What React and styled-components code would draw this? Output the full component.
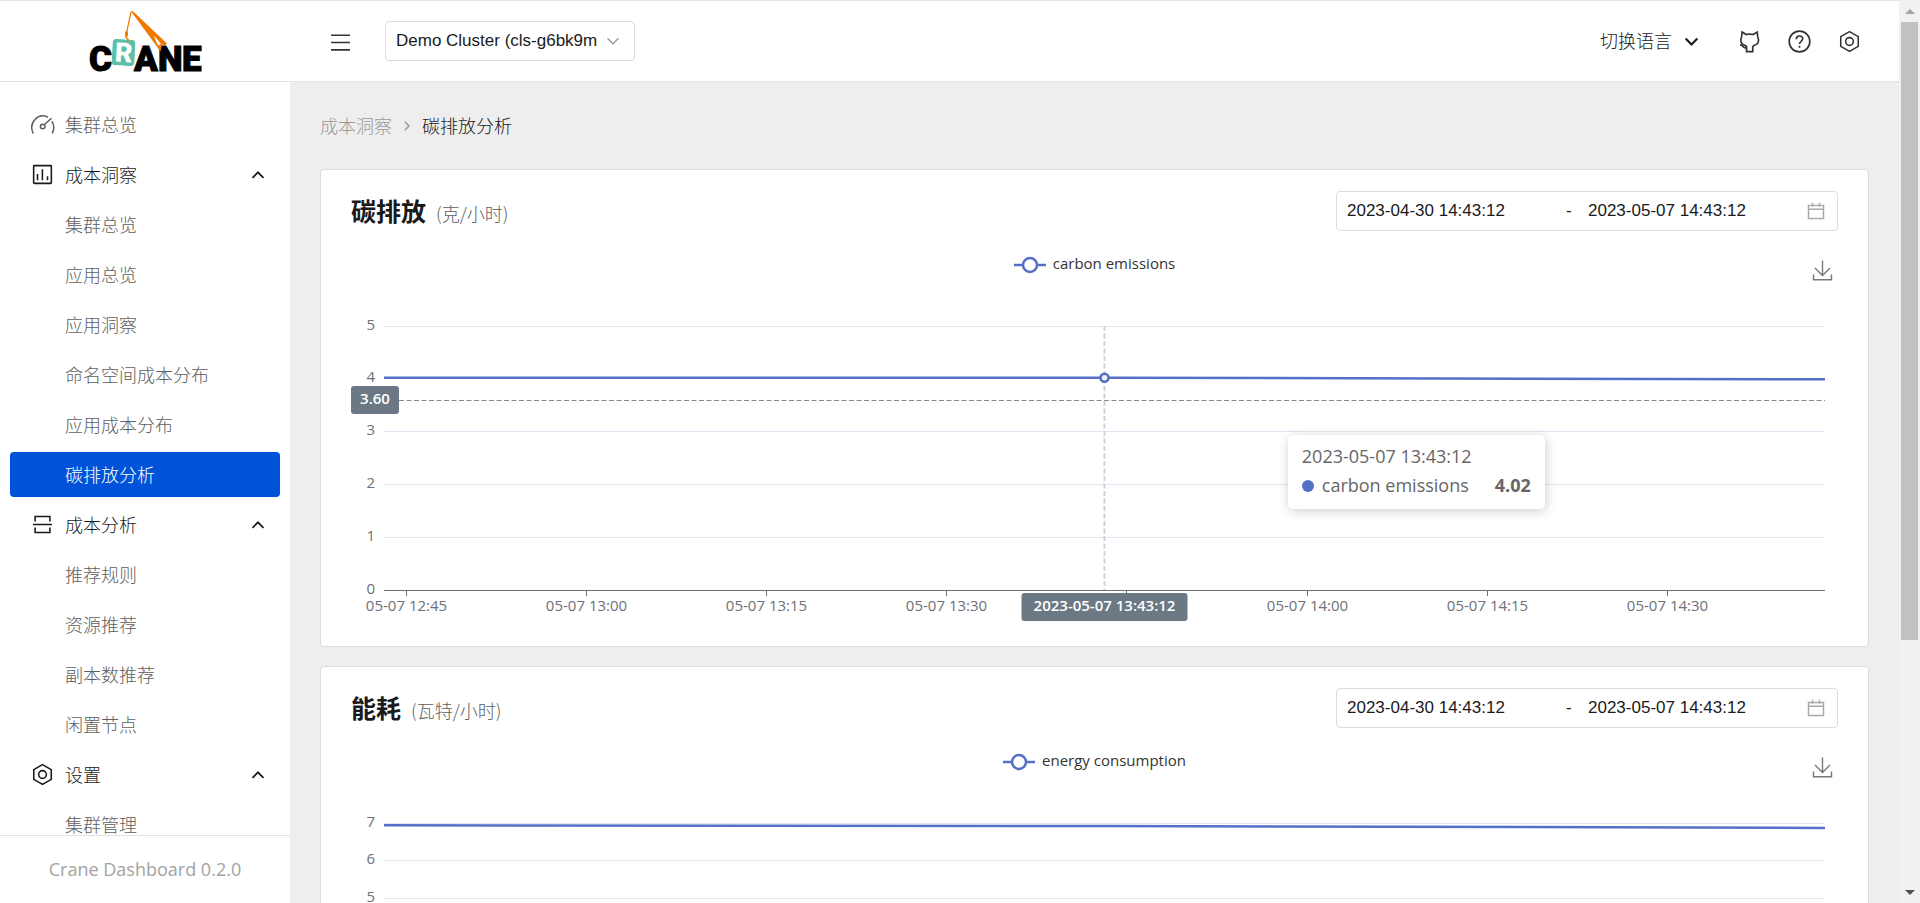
import React, { useLayoutEffect, useRef, useState } from "react";
import styled, { createGlobalStyle, css } from "styled-components";

const SANS = '"Open Sans", "Noto Sans CJK SC", sans-serif';
const CJK = '"Noto Sans CJK SC", sans-serif';
const ARIAL = '"Liberation Sans", "Noto Sans CJK SC", sans-serif';

const GlobalStyle = createGlobalStyle`
  *, *::before, *::after { box-sizing: border-box; }
  body { margin: 0; font-family: ${SANS}; font-size: 18px; color: #1a1a1a; background: #eee; }
  button, input, select { font: inherit; color: inherit; }
  button { border: 0; padding: 0; background: none; cursor: pointer; }
  a { color: inherit; text-decoration: none; }
  ul { list-style: none; margin: 0; padding: 0; }
`;

const Window = styled.div`
  display: flex;
  height: 100vh;
  overflow: hidden;
`;

const Layout = styled.div`
  flex: 1;
  min-width: 0;
  display: flex;
  flex-direction: column;
`;

const Header = styled.header`
  display: flex;
  align-items: center;
  flex: none;
  height: 82px;
  background: #fff;
  border-top: 1px solid #e1e5ea;
  border-bottom: 1px solid #e3e3e3;
`;

const LogoLink = styled.a`
  display: flex;
  justify-content: center;
  width: 290px;
`;

const LogoSvg = styled.svg`
  overflow: visible;
  font-family: Roboto, sans-serif;
  font-weight: 900;
`;

const MenuButton = styled.button`
  display: flex;
  margin-left: 38px;
  padding-top: 2px;
  color: #333;
`;

const SelectBox = styled.div`
  display: grid;
  align-items: center;
  width: 250px;
  height: 40px;
  margin-left: 32px;
  border: 1px solid #dcdcdc;
  border-radius: 4px;

  > * { grid-area: 1 / 1; }
  > svg { justify-self: end; margin-right: 14px; color: #999; pointer-events: none; }
`;

const ClusterSelect = styled.select`
  appearance: none;
  width: 100%;
  height: 38px;
  border: 0;
  padding: 0 30px 2px 10px;
  background: none;
  font-family: ${ARIAL};
  font-size: 17px;
`;

const HeaderActions = styled.nav`
  display: flex;
  align-items: center;
  gap: 25px;
  margin-left: auto;
  padding-right: 37px;
  color: #333;
`;

const LanguageButton = styled.button`
  display: flex;
  align-items: center;
  gap: 12px;
  margin-right: 13px;
  font-family: ${CJK};
  font-weight: 300;
  color: #1a1a1a;

  > span { padding-bottom: 2px; }
`;

const IconButton = styled.button`
  display: flex;
`;

const Body = styled.div`
  flex: 1;
  min-height: 0;
  display: flex;
`;

const Sidebar = styled.aside`
  display: flex;
  flex-direction: column;
  flex: none;
  width: 290px;
  background: #fff;
`;

const Menu = styled.ul`
  flex: 1;
  min-height: 0;
  overflow: hidden;
  padding: 20px 10px 0;
`;

const MenuItem = styled.a`
  display: grid;
  grid-template-columns: 25px 1fr auto;
  column-gap: 10px;
  align-items: center;
  height: 45px;
  margin-bottom: 5px;
  padding: 0 15px 0 20px;
  border-radius: 4px;
  font-family: ${CJK};
  font-weight: 300;
  color: #5e5e5e;

  > span { grid-column: 2; padding-bottom: 2px; }
  ${(p) => p.$group && css`color: #1a1a1a;`}
  ${(p) => p.$active && css`background: #0052d9; color: #fff;`}
`;

const Version = styled.footer`
  flex: none;
  height: 68px;
  line-height: 67px;
  border-top: 1px solid #e3e3e3;
  text-align: center;
  color: #a3a3a3;
`;

const Main = styled.main`
  flex: 1;
  min-width: 0;
  overflow: hidden;
  padding: 30px 30px 0;
`;

const Breadcrumb = styled.nav`
  display: flex;
  align-items: center;
  gap: 12px;
  height: 28px;
  margin-bottom: 29px;
  font-family: ${CJK};
  font-weight: 300;
  color: #999;

  > a, > span { padding-bottom: 2px; }
`;

const Current = styled.span`
  color: #1a1a1a;
`;

const Card = styled.section`
  margin-bottom: 19px;
  padding: 21px 30px;
  border: 1px solid #dcdcdc;
  border-radius: 4px;
  background: #fff;
`;

const CardHeader = styled.div`
  display: flex;
  justify-content: space-between;
  align-items: center;
  height: 40px;
`;

const Title = styled.h2`
  margin: 0;
  font-family: ${CJK};
  font-size: 25px;
  font-weight: 700;
  line-height: 40px;
`;

const Unit = styled.small`
  margin-left: 10px;
  font-size: 18px;
  font-weight: 300;
  color: #5e5e5e;
`;

const RangePicker = styled.div`
  display: flex;
  align-items: center;
  width: 502px;
  height: 40px;
  padding: 0 12px 0 10px;
  border: 1px solid #dcdcdc;
  border-radius: 4px;
  font-family: ${ARIAL};
  font-size: 17px;

  > svg { color: #aaa; }
`;

const DateInput = styled.input`
  flex: 1;
  min-width: 0;
  height: 38px;
  border: 0;
  padding: 0;
  background: none;
`;

const Dash = styled.span`
  width: 22px;
`;

const Toolbar = styled.div`
  display: grid;
  grid-template-columns: 40px 1fr 40px;
  align-items: start;
  height: 58px;
  padding-top: 20px;
`;

const Legend = styled.button`
  display: flex;
  align-items: center;
  justify-self: center;
  grid-column: 2;
  gap: 7px;
  height: 28px;
  font-size: 15px;
  color: #333;

  > span { padding-bottom: 4px; }
`;

const Download = styled.button`
  display: flex;
  align-items: center;
  justify-content: flex-end;
  height: 38px;
  padding-right: 5px;
  color: #777;
`;

const ChartArea = styled.div`
  position: relative;
  height: 336px;
`;

const ChartSvg = styled.svg`
  display: block;
  width: 100%;
  height: 100%;
  overflow: visible;
  font-size: 15px;
  fill: #6e7079;
`;

const Tooltip = styled.div`
  position: absolute;
  left: 63%;
  top: 146px;
  width: 257px;
  padding: 7px 14px 9px;
  border-radius: 5px;
  background: #fff;
  box-shadow: 1px 2px 12px rgba(0, 0, 0, 0.2);
  line-height: 29px;
  color: #666;
`;

const TooltipRow = styled.div`
  display: flex;
  align-items: center;
  gap: 8px;

  > b { margin-left: auto; }
`;

const Dot = styled.i`
  width: 12px;
  height: 12px;
  border-radius: 50%;
  background: #5470c6;
`;

const Scrollbar = styled.div`
  display: flex;
  flex-direction: column;
  align-items: center;
  flex: none;
  width: 21px;
  background: #f1f1f1;
`;

const Arrow = styled.i`
  flex: none;
  display: flex;
  align-items: center;
  justify-content: center;
  height: 22px;

  &::before {
    content: "";
    border: 5px solid transparent;
    border-top-width: 0;
    border-bottom-color: #a3a3a3;
    ${(p) => p.$down && css`
      border-top: 5px solid #505050;
      border-bottom: 0;
    `}
  }
`;

const Track = styled.div`
  flex: 1;
  width: 17px;
`;

const Thumb = styled.div`
  height: 72%;
  background: #c1c1c1;
`;

function Icon({ size = 25, w = 2, children, ...rest }) {
  return (
    <svg width={size} height={size} viewBox="0 0 24 24" fill="none" stroke="currentColor" strokeWidth={w} aria-hidden="true" {...rest}>
      {children}
    </svg>
  );
}

const Chevron = ({ up, width = 14, w = 1.7 }) => (
  <svg width={width} height={width} viewBox="0 0 14 14" fill="none" stroke="currentColor" strokeWidth={w} aria-hidden="true">
    <path d={up ? "M1.5 9.8 7 4.3l5.5 5.5" : "M1.5 4.3 7 9.8l5.5-5.5"} />
  </svg>
);

const SettingIcon = () => (
  <Icon w={1.5}>
    <path d="M12 2.500 20.400 7.300v9.400L12 21.500 3.600 16.700V7.300z" />
    <circle cx="12" cy="12" r="3.700" />
  </Icon>
);

const GaugeIcon = () => (
  <svg width="25" height="25" viewBox="0 0 25 25" fill="none" stroke="currentColor" strokeWidth="1.5" aria-hidden="true">
    <path d="M3.200 21.500C.8 16.500 1.600 11 5.200 7.300 8.600 3.700 13.600 3.100 18 5.200M21.800 9.200c2.300 3.700 2.600 8.200.4 12.300M14.500 12.500l7-6.300" />
    <circle cx="12.700" cy="14.500" r="2.300" />
  </svg>
);

const BarsIcon = () => (
  <Icon w={1.5}>
    <rect x="3.500" y="3.500" width="17" height="17" rx=".6" />
    <path d="M7.200 11.600v6M11.900 7v10.600M16.800 13.600v4" />
  </Icon>
);

const CostIcon = () => (
  <Icon w={1.5}>
    <path d="M4.900 9.200V4.400h14.200v4.800M2.900 12h18.200M4.900 14.800v4.800h14.200v-4.800" />
  </Icon>
);

const GithubIcon = () => (
  <Icon w={1.6}>
    <path d="M4.900 2.900 8.900 5.300c2.100-.5 4.400-.5 6.500 0l4-2.400.5 4.700c2 4.300.2 7.700-4 8.400l-.8 1.100v4.600H9.200v-4.600L8.400 16C4.200 15.300 2.400 11.900 4.400 7.600z" />
    <path d="M2.900 15.400h1.500c.8.400 1.300 2.900 4.600 3" />
  </Icon>
);

const HelpIcon = () => (
  <Icon w={1.6}>
    <circle cx="12" cy="12" r="9.900" />
    <path d="M8.900 9.800c0-4 6.200-4.100 6.200-.4 0 2.400-3.100 2.400-3.100 5M12 16v2" />
  </Icon>
);

const Logo = () => (
  <LogoSvg width="114" height="66" viewBox="88 8 114 66" role="img" aria-label="Crane">
    <g fontSize="35" stroke="#000" strokeWidth="1">
      <text x="89" y="71">C</text>
      <text x="134" y="71">A</text>
      <text x="158" y="71">N</text>
      <text x="182" y="71">E</text>
    </g>
    <path d="M131 11.300c1-.8 2 0 3 1L167 43.500l-2 2-3-1-1.500 7z" fill="#f07800" />
    <path d="M153.500 35 161 44l-3 1.500z" fill="#fff" />
    <g transform="rotate(3 123.500 52)">
      <rect x="112.800" y="40" width="21.500" height="25" rx="3" fill="#5bbfa9" stroke="#5bbfa9" strokeWidth="1" />
      <text x="115" y="62" fontSize="27" fill="#fff">R</text>
    </g>
    <path d="M131 12 126.500 33l-.6 4 2.600 3-1.500 1.500" fill="none" stroke="#f07800" strokeWidth="1.200" />
    <ellipse cx="126.500" cy="34" rx="1.500" ry="3" fill="#f07800" />
  </LogoSvg>
);

const MENU = [
  { label: "集群总览", icon: <GaugeIcon /> },
  { label: "成本洞察", icon: <BarsIcon />, group: true },
  { label: "集群总览" },
  { label: "应用总览" },
  { label: "应用洞察" },
  { label: "命名空间成本分布" },
  { label: "应用成本分布" },
  { label: "碳排放分析", active: true },
  { label: "成本分析", icon: <CostIcon />, group: true },
  { label: "推荐规则" },
  { label: "资源推荐" },
  { label: "副本数推荐" },
  { label: "闲置节点" },
  { label: "设置", icon: <SettingIcon />, group: true },
  { label: "集群管理" },
];

const TIMES = ["12:45", "13:00", "13:15", "13:30", "13:45", "14:00", "14:15", "14:30"];
const PLOT = { left: 33, right: 13, top: 37, height: 264 };

function LineChart({ max, points, pointer, label }) {
  const ref = useRef(null);
  const [width, setWidth] = useState(1488);
  useLayoutEffect(() => {
    const measure = () => setWidth(ref.current.clientWidth);
    measure();
    const observer = new ResizeObserver(measure);
    observer.observe(ref.current);
    return () => observer.disconnect();
  }, []);

  const x0 = PLOT.left;
  const x1 = width - PLOT.right;
  const bottom = PLOT.top + PLOT.height;
  const y = (v) => bottom - (v / max) * PLOT.height;
  // The window covers two hours; the first tick falls 1.83 minutes in.
  const x = (minutes) => x0 + (minutes / 120) * (x1 - x0);
  const ticks = Array.from({ length: max + 1 }, (_, i) => i);
  const line = points.map(([m, v]) => `${x(m)},${y(v)}`).join(" ");
  const px = x(60);

  return (
    <ChartArea ref={ref}>
      <ChartSvg role="img" aria-label={label}>
        {ticks.map((t) => (
          <g key={t}>
            {t > 0 && <line x1={x0} x2={x1} y1={Math.floor(y(t)) + 0.5} y2={Math.floor(y(t)) + 0.5} stroke="#e0e6f1" />}
            <text x={x0 - 9} y={Math.floor(y(t)) + 4} textAnchor="end">{t}</text>
          </g>
        ))}
        <line x1={x0} x2={x1} y1={bottom + 0.5} y2={bottom + 0.5} stroke="#6e7079" />
        {TIMES.map((t, i) => {
          const tx = Math.round(x(1.83 + i * 15)) + 0.5;
          return (
            <g key={t}>
              <line x1={tx} x2={tx} y1={bottom} y2={bottom + 6} stroke="#6e7079" />
              {!(pointer && t === "13:45") && <text x={tx} y={bottom + 21} textAnchor="middle">{`05-07 ${t}`}</text>}
            </g>
          );
        })}
        {pointer && (
          <>
            <line x1={px} x2={px} y1={PLOT.top} y2={bottom} stroke="#cfd3db" strokeWidth="2" strokeDasharray="5 2.5" />
            <line x1={x0} x2={x1} y1={Math.round(y(3.6)) + 0.5} y2={Math.round(y(3.6)) + 0.5} stroke="#888" strokeDasharray="5 2.5" />
          </>
        )}
        <polyline points={line} fill="none" stroke="#5470c6" strokeWidth="2.5" />
        {pointer && (
          <>
            <circle cx={px} cy={y(4.02)} r="4" fill="#eceef5" stroke="#5470c6" strokeWidth="2.5" />
            <rect x="0" y="97" width="48" height="28" rx="3" fill="#6c7985" />
            <text x="24" y="115" textAnchor="middle" fill="#fff" fontWeight="600">3.60</text>
            <rect x={px - 83} y={bottom + 3} width="166" height="28" rx="3" fill="#6c7985" />
            <text x={px} y={bottom + 21} textAnchor="middle" fill="#fff" fontWeight="600">2023-05-07 13:43:12</text>
          </>
        )}
      </ChartSvg>
      {pointer && (
        <Tooltip>
          2023-05-07 13:43:12
          <TooltipRow><Dot />carbon emissions<b>4.02</b></TooltipRow>
        </Tooltip>
      )}
    </ChartArea>
  );
}

function ChartCard({ title, unit, series, ...chart }) {
  return (
    <Card>
      <CardHeader>
        <Title>{title}<Unit>({unit})</Unit></Title>
        <RangePicker>
          <DateInput aria-label={`${title} 开始时间`} defaultValue="2023-04-30 14:43:12" />
          <Dash>-</Dash>
          <DateInput aria-label={`${title} 结束时间`} defaultValue="2023-05-07 14:43:12" />
          <svg width="18" height="18" viewBox="0 0 18 18" fill="none" stroke="currentColor" strokeWidth="1.5" aria-hidden="true">
            <path d="M1.500 3.500h15v13h-15zM1.500 7.300h15M5.500.8v4M12.500.8v4" />
          </svg>
        </RangePicker>
      </CardHeader>
      <Toolbar>
        <Legend>
          <svg width="32" height="18" viewBox="0 0 32 18" fill="#fff" stroke="#5470c6" strokeWidth="2.5" aria-hidden="true">
            <path d="M0 9h32" /><circle cx="16" cy="9" r="7" />
          </svg>
          <span>{series}</span>
        </Legend>
        <Download aria-label="下载">
          <svg width="21" height="21" viewBox="0 0 21 21" fill="none" stroke="currentColor" strokeWidth="1.4" aria-hidden="true">
            <path d="M10.500.5v15M3 8l7.500 7.500L18 8M1.500 14.500v5.300h18v-5.300" />
          </svg>
        </Download>
      </Toolbar>
      <LineChart label={series} {...chart} />
    </Card>
  );
}

export default function App() {
  return (
    <>
      <GlobalStyle />
      <Window>
        <Layout>
          <Header>
            <LogoLink href="#" aria-label="Crane"><Logo /></LogoLink>
            <MenuButton aria-label="菜单"><Icon w={1.6}><path d="M2.900 5h18.200M2.900 12h18.200M2.900 19h18.200" /></Icon></MenuButton>
            <SelectBox>
              <ClusterSelect aria-label="集群"><option>Demo Cluster (cls-g6bk9m</option></ClusterSelect>
              <Chevron w={1.4} />
            </SelectBox>
            <HeaderActions>
              <LanguageButton><span>切换语言</span><Chevron width={15} w={2} /></LanguageButton>
              <IconButton aria-label="GitHub"><GithubIcon /></IconButton>
              <IconButton aria-label="帮助"><HelpIcon /></IconButton>
              <IconButton aria-label="设置"><SettingIcon /></IconButton>
            </HeaderActions>
          </Header>
          <Body>
            <Sidebar>
              <Menu>
                {MENU.map((m, i) => (
                  <li key={i}>
                    <MenuItem href="#" $group={m.group} $active={m.active}>
                      {m.icon}
                      <span>{m.label}</span>
                      {m.group && <Chevron up />}
                    </MenuItem>
                  </li>
                ))}
              </Menu>
              <Version>Crane Dashboard 0.2.0</Version>
            </Sidebar>
            <Main>
              <Breadcrumb>
                <a href="#">成本洞察</a>
                <svg width="6" height="10" viewBox="0 0 6 10" fill="none" stroke="currentColor" strokeWidth="1.5" aria-hidden="true"><path d="M.8.8 5 5 .8 9.200" /></svg>
                <Current>碳排放分析</Current>
              </Breadcrumb>
              <ChartCard title="碳排放" unit="克/小时" series="carbon emissions" max={5} points={[[0, 4.02], [60, 4.02], [120, 3.99]]} pointer />
              <ChartCard title="能耗" unit="瓦特/小时" series="energy consumption" max={7} points={[[0, 6.94], [60, 6.92], [120, 6.87]]} />
            </Main>
          </Body>
        </Layout>
        <Scrollbar aria-hidden="true">
          <Arrow />
          <Track><Thumb /></Track>
          <Arrow $down />
        </Scrollbar>
      </Window>
    </>
  );
}
